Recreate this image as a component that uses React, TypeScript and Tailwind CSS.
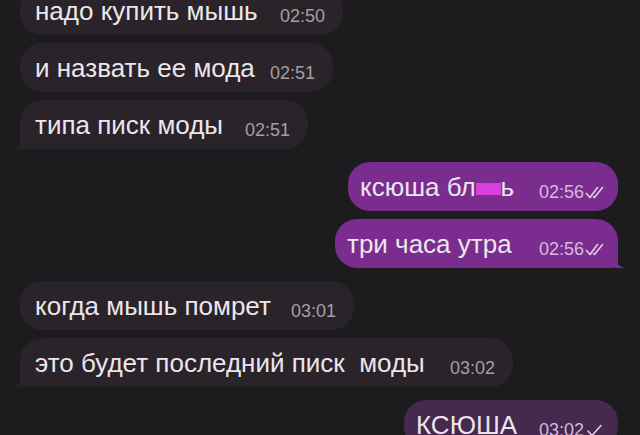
import React from 'react'

type Msg = {
  text: React.ReactNode
  time: string
  out?: boolean
  tail?: boolean
  checks?: 1 | 2
  w?: string
  dark?: boolean
}

const messages: Msg[] = [
  { text: 'надо купить мышь', time: '02:50', w: 'w-[323px]' },
  { text: 'и назвать ее мода', time: '02:51', w: 'w-[313px]' },
  { text: 'типа писк моды', time: '02:51', tail: true, w: 'w-[288px]' },
  {
    text: (
      <>
        ксюша бл
        <span className="inline-block w-[25px] h-[12px] bg-[#d83fdc] align-[1px]" />ь
      </>
    ),
    time: '02:56',
    out: true,
    checks: 2,
    w: 'w-[270px]',
  },
  { text: 'три часа утра', time: '02:56', out: true, checks: 2, tail: true, w: 'w-[283px]' },
  { text: 'когда мышь помрет', time: '03:01', w: 'w-[334px]' },
  { text: 'это будет последний писк  моды', time: '03:02', tail: true, w: 'w-[493px]' },
  { text: 'КСЮША', time: '03:02', out: true, checks: 1, dark: true, w: 'w-[214px]' },
]

function Checks({ n }: { n: 1 | 2 }) {
  return (
    <svg width="21" height="13" viewBox="0 0 21 13" fill="none" stroke="#e6cdea" strokeWidth="1.6" strokeLinecap="round" strokeLinejoin="round">
      {n === 2 ? (
        <>
          <path d="M1.5 7.5 L5 11.5 L12.5 1.5" />
          <path d="M8.5 10.5 L9.5 11.5 L17.5 1.5" />
        </>
      ) : (
        <path d="M3 7 L7 11.5 L16 1.5" />
      )}
    </svg>
  )
}

function Bubble({ m, first }: { m: Msg; first: boolean }) {
  const bg = m.out ? (m.dark ? 'bg-[#45294f]' : 'bg-[#7b2c8f]') : 'bg-[#2a2329]'
  const fill = m.out ? (m.dark ? '#45294f' : '#7b2c8f') : '#2a2329'
  const corner = m.tail ? (m.out ? 'rounded-br-[6px]' : 'rounded-bl-[6px]') : ''
  return (
    <div className={`flex ${m.out ? 'justify-end pr-[22px]' : 'justify-start pl-[20px]'} ${first ? '' : ''}`}>
      <div
        className={`relative ${m.w} h-[49px] ${bg} rounded-[22px] ${corner} flex items-baseline justify-between pt-[11px] ${
          m.out ? 'pl-[12px] pr-[12px]' : 'pl-[15px] pr-[18px]'
        }`}
      >
        <span className="text-[26px] leading-[28px] text-[#ebe6ec] whitespace-pre">{m.text}</span>
        <span className={`flex items-center gap-[1px] text-[18px] leading-none translate-y-[2px] ${m.out ? 'text-[#d8b9de]' : 'text-[#a59ea5]'}`}>
          {m.time}
          {m.checks && <Checks n={m.checks} />}
        </span>
        {m.tail && (
          <svg
            width="10"
            height="12"
            viewBox="0 0 10 12"
            className={`absolute bottom-0 ${m.out ? '-right-[7px]' : '-left-[7px] -scale-x-100'}`}
          >
            <path d="M0 0 C0 6 3 10 10 12 L0 12 Z" fill={fill} />
          </svg>
        )}
      </div>
    </div>
  )
}

export default function App() {
  return (
    <div className="w-[640px] h-[435px] overflow-hidden bg-[#1c1b1d] font-['Liberation_Sans',Arial,sans-serif]">
      <div className="flex flex-col -mt-[14px]">
        {messages.map((m, i) => {
          const prev = messages[i - 1]
          const gap = i === 0 ? '' : prev.out !== m.out ? 'mt-[13px]' : 'mt-[8px]'
          return (
            <div key={i} className={gap}>
              <Bubble m={m} first={i === 0} />
            </div>
          )
        })}
      </div>
    </div>
  )
}
